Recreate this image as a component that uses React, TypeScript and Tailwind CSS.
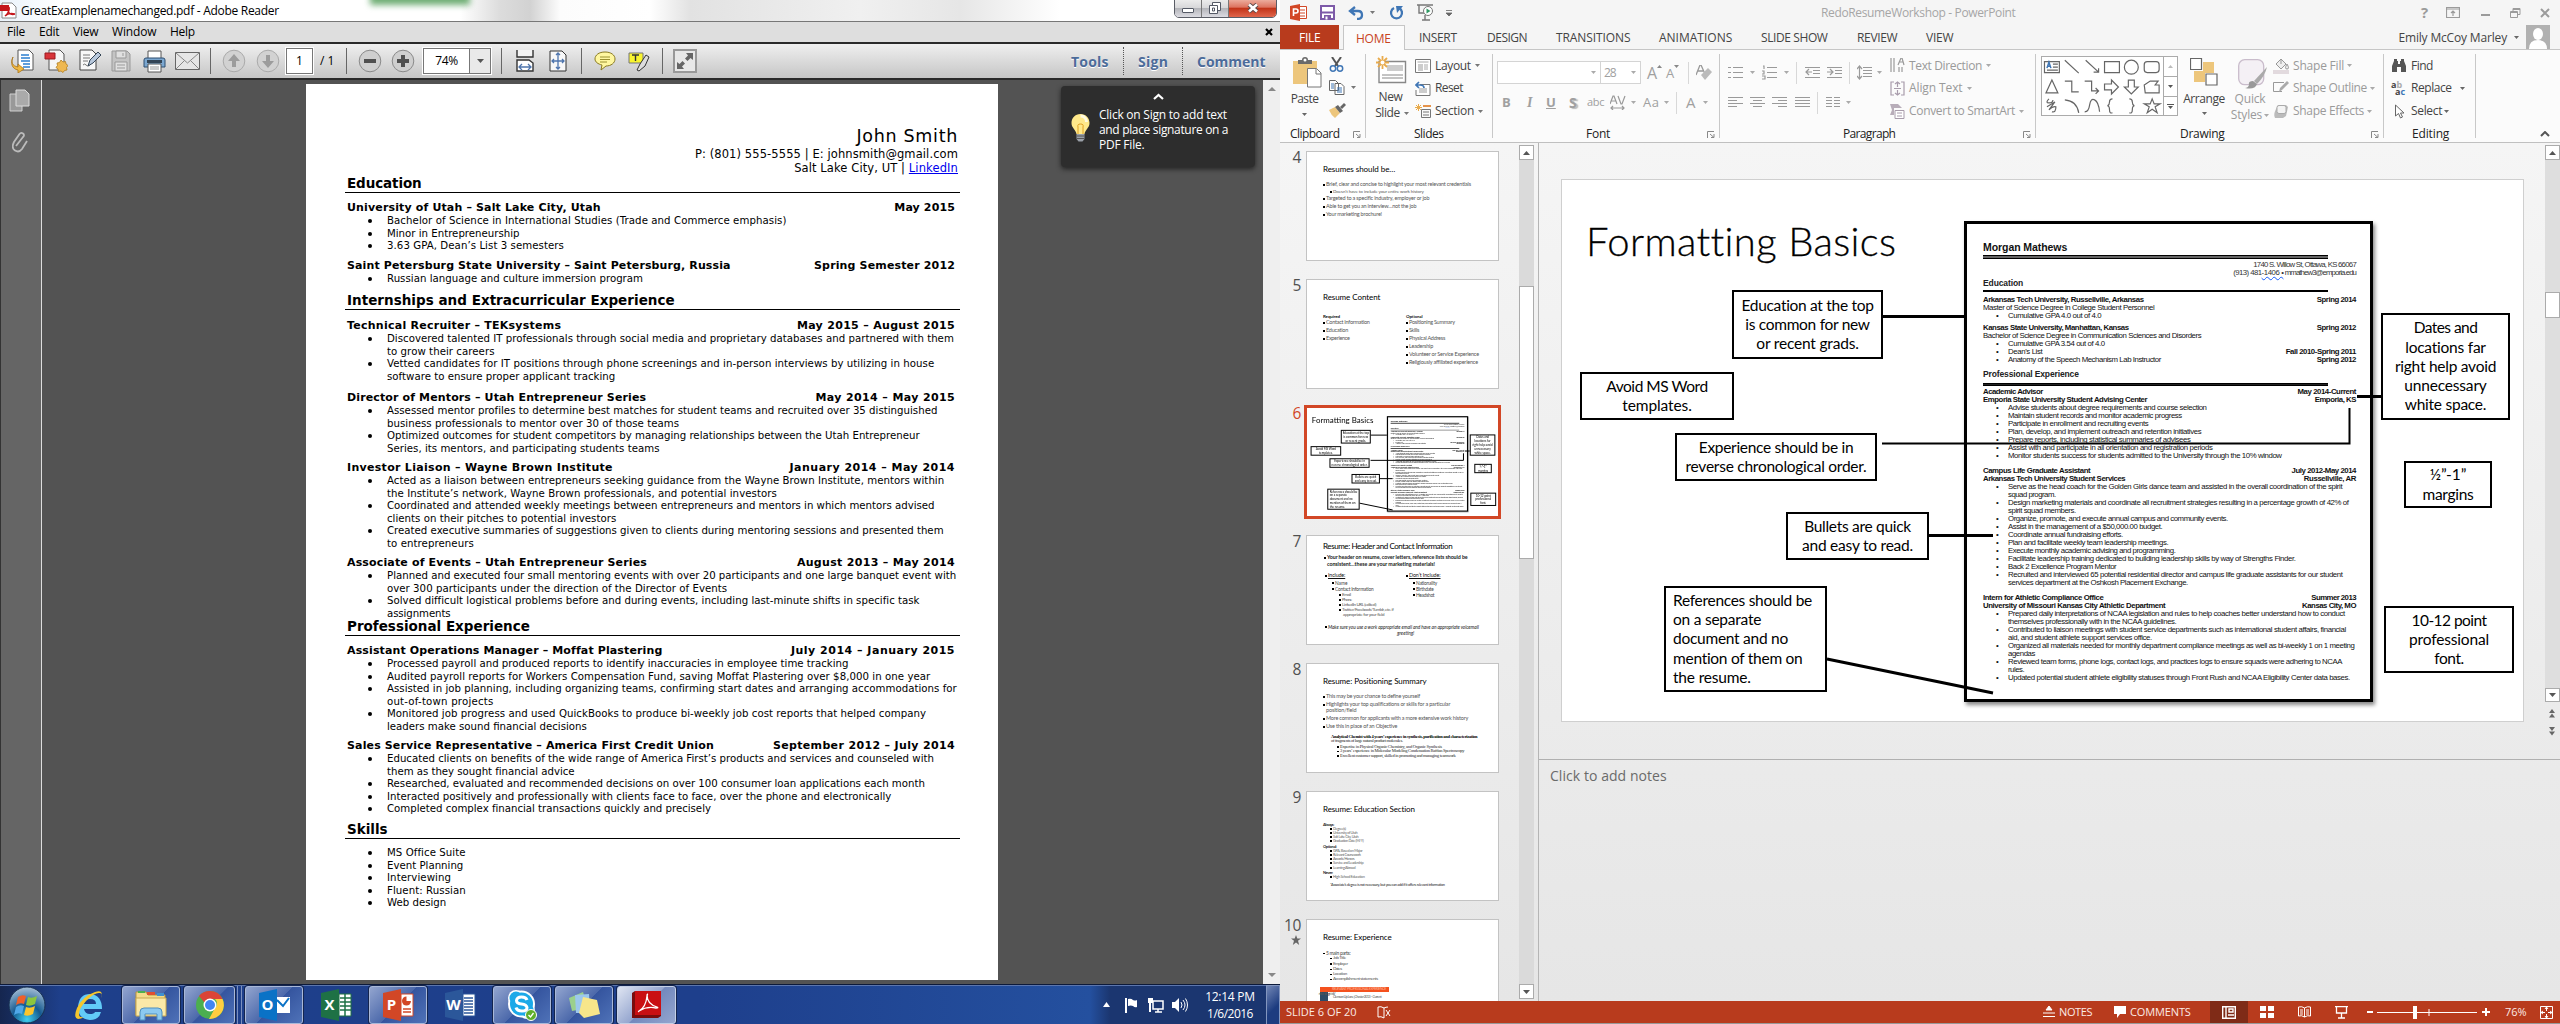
import { useLayoutEffect, useRef, type ReactNode } from "react";

/* Text whose tracking is adjusted so that it fills a given width. */
function T({ w, className = "", children }: { w: number; className?: string; children: string }) {
  const ref = useRef<HTMLSpanElement>(null);
  useLayoutEffect(() => {
    const el = ref.current;
    if (!el) return;
    el.style.letterSpacing = "0px";
    const gap = (w - el.offsetWidth) / children.length;
    el.style.letterSpacing = `${gap.toFixed(3)}px`;
  }, [w, children]);
  return (
    <span ref={ref} className={`inline-block shrink-0 whitespace-nowrap ${className}`}>
      {children}
    </span>
  );
}

function Caret({ className = "text-[#777]" }: { className?: string }) {
  return (
    <svg width="5" height="3" viewBox="0 0 5 3" className={`shrink-0 ${className}`}>
      <path d="M0 0h5L2.5 3z" fill="currentColor" />
    </svg>
  );
}

/* ------------------------------------------------------------------ */
/* Adobe Reader                                                        */
/* ------------------------------------------------------------------ */

function TitleBar() {
  return (
    <div className="relative flex h-[22px] items-center overflow-hidden border-b border-[#777] bg-[linear-gradient(90deg,#e9f2fa_0px,#fff_60px,#fff_460px,#dcdcdc_500px,#d2d2d2_530px,#fcfcfc_560px,#fff_650px,#e2e2e2_690px,#f0f0f0_860px,#e6e6e6_960px,#fff_1060px,#fff_1280px)]">
      <div className="absolute top-[-8px] left-[370px] h-[13px] w-[100px] bg-[#6fae74] blur-[3px]" />
      <svg width="17" height="17" viewBox="0 0 17 17" className="shrink-0">
        <path d="M2 1h10l4 4v11H2z" fill="#fff" stroke="#888" />
        <path d="M0 3h9v6H0z" fill="#c4161c" />
        <path d="M5 14c3-2 5-6 4-9M8 9c1 3 4 4 7 3M5 14c2-2 6-3 10-2" fill="none" stroke="#c4161c" strokeWidth="1.5" />
      </svg>
      <T w={258} className="ml-1 text-[12px] text-black">GreatExamplenamechanged.pdf - Adobe Reader</T>
      <div className="absolute top-[-2px] left-[1174px] flex h-[20px] w-[103px] overflow-hidden rounded-b-[5px] border border-[#5a5d66]">
        <div className="flex w-[27px] items-center justify-center border-r border-[#777] bg-[linear-gradient(#eee_0%,#d8d8da_48%,#b4b5ba_52%,#dcdce2_100%)]">
          <div className="mt-1 h-[5px] w-[12px] rounded-[1px] border border-[#555a66] bg-white" />
        </div>
        <div className="flex w-[27px] items-center justify-center border-r border-[#777] bg-[linear-gradient(#eee_0%,#d8d8da_48%,#b4b5ba_52%,#dcdce2_100%)]">
          <svg width="13" height="12" viewBox="0 0 13 12">
            <path d="M3.5.5h8v8h-8z" fill="#fff" stroke="#555a66" />
            <path d="M.5 3.5h8v8h-8z" fill="#fff" stroke="#555a66" />
            <path d="M3.5 6h2v3h-2z" fill="#fff" stroke="#555a66" />
          </svg>
        </div>
        <div className="flex grow items-center justify-center bg-[linear-gradient(#eeb3a4_0%,#dd7460_45%,#c23419_52%,#e0664c_100%)]">
          <svg width="12" height="10" viewBox="0 0 12 10">
            <path d="M2 1.5l8 7M10 1.5l-8 7" stroke="#5b4a4a" strokeWidth="4.5" />
            <path d="M2 1.5l8 7M10 1.5l-8 7" stroke="#fff" strokeWidth="2.6" />
          </svg>
        </div>
      </div>
    </div>
  );
}

function MenuBar() {
  return (
    <div className="flex h-[20px] items-center bg-[#dedede] pl-[7px] text-[12px] text-black">
      <div className="w-[32px]"><T w={18}>File</T></div>
      <div className="w-[34px]"><T w={20}>Edit</T></div>
      <div className="w-[39px]"><T w={25}>View</T></div>
      <div className="w-[58px]"><T w={44}>Window</T></div>
      <div className="w-[40px]"><T w={25}>Help</T></div>
      <svg width="8" height="8" viewBox="0 0 8 8" className="mr-[7px] ml-auto">
        <path d="M1 1l6 6M7 1l-6 6" stroke="#000" strokeWidth="2.2" />
      </svg>
    </div>
  );
}

const sheet = "M5 1h11l4 4v16H5z";

function ReaderToolbar() {
  return (
    <div className="flex h-[38px] items-center border-y-[2px] border-[#2a2a2a] bg-[linear-gradient(#efefef,#c6c6c6)] pl-[10px] text-[12px] text-black">
      <div className="w-[34px]">
        <svg width="24" height="24" viewBox="0 0 24 24">
          <path d="M8 1h11l4 4v16H8z" fill="#fff" stroke="#555" />
          <path d="M11 6h8M11 9h9M11 12h9M13 15h7M13 18h7" stroke="#2c7fd0" strokeWidth="1.5" />
          <path d="M3 8c-2 5-1 9 5 10v-3l6 5-6 4v-3C2 20 0 14 3 8z" fill="#f0b840" stroke="#a8741a" strokeWidth=".8" />
        </svg>
      </div>
      <div className="w-[34px]">
        <svg width="24" height="24" viewBox="0 0 24 24">
          <path d={sheet} fill="#f6f6f6" stroke="#555" />
          <path d="M1 4h10v6H1z" fill="#d8343a" stroke="#9c1a20" />
          <path d="M17 11l2 2 2.5-.5.5 2.5 2 1.5-1.5 2 .5 2.5-2.5.5-1.5 2-2-1.5-2.5.5-.5-2.5-2-1.5 1.5-2-.5-2.5 2.5-.5z" fill="#efb850" stroke="#b07c20" strokeWidth=".8" />
        </svg>
      </div>
      <div className="w-[33px]">
        <svg width="24" height="24" viewBox="0 0 24 24">
          <path d="M2 1h12l4 4v16H2z" fill="#f8f8f8" stroke="#444" />
          <path d="M5 6h7M5 9h7M5 12h5M5 16q2-2 3 0t4 0" fill="none" stroke="#777" />
          <path d="M10 17l2-6 8-8 3 3-8 8z" fill="#b8c8dc" stroke="#345" />
        </svg>
      </div>
      <div className="w-[32px]">
        <svg width="20" height="22" viewBox="0 0 20 22">
          <path d="M1 1h15l3 3v17H1z" fill="#c4c4c4" stroke="#999" />
          <path d="M5 1h10v7H5zM4 12h12v9H4z" fill="#e0e0e0" stroke="#999" />
          <path d="M6 15h8M6 18h8M12 3v3" stroke="#999" />
        </svg>
      </div>
      <div className="w-[32px]">
        <svg width="23" height="23" viewBox="0 0 23 23">
          <path d="M5 1h13v9H5z" fill="#fff" stroke="#555" />
          <path d="M1 10q0-2 2-2h17q2 0 2 2v7H1z" fill="#7ba7d0" stroke="#2f4f70" />
          <path d="M4 10h15v3H4z" fill="#345" />
          <path d="M5 14h13v8H5z" fill="#fff" stroke="#555" />
          <path d="M7 17h9M7 19h9" stroke="#999" />
        </svg>
      </div>
      <div className="w-[35px]">
        <svg width="25" height="18" viewBox="0 0 25 18">
          <path d="M.5.5h24v17H.5z" fill="#e6e6e6" stroke="#666" />
          <path d="M1 1l11.5 10L24 1M1 17l8-8M24 17l-8-8" fill="none" stroke="#888" />
        </svg>
      </div>
      <div className="h-[26px] w-[12px] border-l border-[#666]" />
      {["M12 5l6 7h-4v6h-4v-6H6z", "M12 19l-6-7h4V6h4v6h4z"].map((d) => (
        <div key={d} className="w-[34px]">
          <svg width="24" height="24" viewBox="0 0 24 24">
            <circle cx="12" cy="12" r="10.8" fill="#d2d2d2" stroke="#aaa" />
            <path d={d} fill="#9c9c9c" />
          </svg>
        </div>
      ))}
      <div className="-ml-[4px] flex h-[26px] w-[27px] items-center justify-center border border-[#777] bg-white outline outline-white">1</div>
      <div className="w-[33px] pl-[7px]">/ 1</div>
      <div className="h-[26px] w-[12px] border-l border-[#666]" />
      {["M6 10h12v4H6z", "M10 6h4v4h4v4h-4v4h-4v-4H6v-4h4z"].map((d) => (
        <div key={d} className="w-[33px]">
          <svg width="24" height="24" viewBox="0 0 24 24">
            <circle cx="12" cy="12" r="10.8" fill="#cfcfcf" stroke="#8a8a8a" />
            <path d={d} fill="#505050" />
          </svg>
        </div>
      ))}
      <div className="-ml-px flex h-[26px] w-[68px] border border-[#777] bg-white outline outline-white">
        <div className="flex w-[46px] items-center justify-center border-r border-[#777]"><T w={23}>74%</T></div>
        <div className="flex grow items-center justify-center bg-[#e9e9e9]">
          <svg width="7" height="4" viewBox="0 0 7 4"><path d="M0 0h7L3.5 4z" fill="#555" /></svg>
        </div>
      </div>
      <div className="w-[10px]" />
      <div className="h-[26px] w-[15px] border-l border-[#666]" />
      <div className="w-[33px]">
        <svg width="18" height="22" viewBox="0 0 18 22">
          <path d="M1 0v7h16V0" fill="#f4f4f4" stroke="#333" strokeWidth="1.4" />
          <path d="M1 21V10h12l4 3v8z" fill="#fff" stroke="#333" strokeWidth="1.4" />
          <path d="M3 17h12M6 14l-3 3 3 3M12 14l3 3-3 3" fill="none" stroke="#4f75ad" strokeWidth="1.3" />
        </svg>
      </div>
      <div className="w-[32px]">
        <svg width="18" height="22" viewBox="0 0 18 22">
          <path d="M1 1h12l4 4v16H1z" fill="#f8f8f8" stroke="#333" />
          <path d="M9 3v16M3 11h12M7 5l2-2 2 2M7 17l2 2 2-2M5 9l-2 2 2 2M13 9l2 2-2 2" fill="none" stroke="#4f75ad" strokeWidth="1.3" />
        </svg>
      </div>
      <div className="h-[26px] w-[13px] border-l border-[#666]" />
      <div className="w-[34px]">
        <svg width="22" height="20" viewBox="0 0 22 20">
          <path d="M11 1c6 0 10 3 10 7s-4 7-9 7l-5 4 1-5c-4-1-7-3-7-6 0-4 4-7 10-7z" fill="#fff7a0" stroke="#8a7a20" />
          <path d="M6 6h10M6 8.5h10M6 11h7" stroke="#9a9030" />
        </svg>
      </div>
      <div className="w-[34px]">
        <svg width="23" height="21" viewBox="0 0 23 21">
          <path d="M1 2h14v10H1z" fill="#f9f52e" stroke="#777" />
          <path d="M4 4h7M7.5 4v6" stroke="#333" strokeWidth="1.4" />
          <path d="M9 19l3-6 6-9 3 2-4 9-6 5z" fill="#ddd" stroke="#333" />
        </svg>
      </div>
      <div className="h-[26px] w-[11px] border-l border-[#666]" />
      <div className="flex h-[24px] w-[24px] items-center justify-center border-2 border-[#999] bg-[#e8e8e8]">
        <svg width="20" height="20" viewBox="0 0 20 20">
          <path d="M18 2v7l-2.5-2-3 3-2.500-2.500 3-3L11 2zM2 18v-7l2.5 2 3-3L10 12.500l-3 3L9 18z" fill="#666" />
        </svg>
      </div>
      <div className="ml-auto flex items-center text-[14px] font-bold text-[#4c6c9a] [text-shadow:0_1px_0_#fff]">
        <div className="flex h-[28px] w-[53px] items-center border-r border-dotted border-[#555]"><T w={38}>Tools</T></div>
        <div className="flex h-[28px] w-[59px] items-center border-r border-dotted border-[#555] pl-[14px]"><T w={30}>Sign</T></div>
        <div className="flex h-[28px] w-[97px] items-center pl-[14px]"><T w={69}>Comment</T></div>
      </div>
    </div>
  );
}

type Line = [string, number];

function Bullets({ items }: { items: Line[][] }) {
  return (
    <ul className="pl-[20px] text-[10.2px]">
      {items.map((lines) => (
        <li key={lines[0][0]} className="flex">
          <span className="mt-[4px] ml-[1px] h-[4px] w-[4px] rounded-full bg-black" />
          <div className="ml-[15px] flex flex-col">
            {lines.map(([t, w]) => (
              <div key={t} className="h-[12.6px] leading-[12.6px]"><T w={w}>{t}</T></div>
            ))}
          </div>
        </li>
      ))}
    </ul>
  );
}

function Heading({ t, w, h = "h-[24px]" }: { t: string; w: number; h?: string }) {
  return (
    <div className={h}>
      <div className="-ml-[2px] h-[17px] w-[615px] border-b border-black pl-[2px] text-[13.5px] leading-[14px] font-bold"><T w={w}>{t}</T></div>
    </div>
  );
}

function Job({ t, w, d, dw, h, items }: { t: string; w: number; d: string; dw: number; h: string; items: Line[][] }) {
  return (
    <div className={`pt-[1px] ${h}`}>
      <div className="flex h-[14px] justify-between pr-[2px] text-[11px] leading-[14px] font-bold">
        <T w={w}>{t}</T>
        <T w={dw}>{d}</T>
      </div>
      <Bullets items={items} />
    </div>
  );
}

function Resume() {
  return (
    <div className="ml-[264px] h-[896px] w-[692px] bg-white pt-[42px] pr-[41px] pl-[41px] font-['DejaVu_Sans'] text-black">
      <div className="-mr-px flex h-[50px] flex-col items-end">
        <div className="h-[21px] text-[17.5px] leading-[21px]"><T w={102}>John Smith</T></div>
        <div className="h-[14px] text-[11.5px] leading-[14px]"><T w={263}>P: (801) 555-5555 | E: johnsmith@gmail.com</T></div>
        <div className="flex h-[14px] text-[11.5px] leading-[14px]">
          <T w={115}>Salt Lake City, UT |&nbsp;</T>
          <T w={49} className="text-[#0000ee] underline">LinkedIn</T>
        </div>
      </div>
      <Heading t="Education" w={75} />
      <Job t="University of Utah – Salt Lake City, Utah" w={254} d="May 2015" dw={61} h="h-[58px]" items={[
        [["Bachelor of Science in International Studies (Trade and Commerce emphasis)", 399]],
        [["Minor in Entrepreneurship", 133]],
        [["3.63 GPA, Dean’s List 3 semesters", 177]],
      ]} />
      <Job t="Saint Petersburg State University – Saint Petersburg, Russia" w={384} d="Spring Semester 2012" dw={141} h="h-[35px]" items={[
        [["Russian language and culture immersion program", 256]],
      ]} />
      <Heading t="Internships and Extracurricular Experience" w={328} h="h-[25px]" />
      <Job t="Technical Recruiter – TEKsystems" w={214} d="May 2015 – August 2015" dw={158} h="h-[72px]" items={[
        [["Discovered talented IT professionals through social media and proprietary databases and partnered with them", 567], ["to grow their careers", 108]],
        [["Vetted candidates for IT positions through phone screenings and in-person interviews by utilizing in house", 547], ["software to ensure proper applicant tracking", 228]],
      ]} />
      <Job t="Director of Mentors – Utah Entrepreneur Series" w={299} d="May 2014 – May 2015" dw={139} h="h-[70px]" items={[
        [["Assessed mentor profiles to determine best matches for student teams and recruited over 35 distinguished", 550], ["business professionals to mentor over 30 of those teams", 292]],
        [["Optimized outcomes for student competitors by managing relationships between the Utah Entrepreneur", 533], ["Series, its mentors, and participating students teams", 273]],
      ]} />
      <Job t="Investor Liaison – Wayne Brown Institute" w={266} d="January 2014 – May 2014" dw={165} h="h-[95px]" items={[
        [["Acted as a liaison between entrepreneurs seeking guidance from the Wayne Brown Institute, mentors within", 557], ["the Institute’s network, Wayne Brown professionals, and potential investors", 390]],
        [["Coordinated and attended weekly meetings between entrepreneurs and mentors in which mentors advised", 548], ["clients on their pitches to potential investors", 229]],
        [["Created executive summaries of suggestions given to clients during mentoring sessions and presented them", 557], ["to entrepreneurs", 87]],
      ]} />
      <Job t="Associate of Events – Utah Entrepreneur Series" w={300} d="August 2013 – May 2014" dw={158} h="h-[64px]" items={[
        [["Planned and executed four small mentoring events with over 20 participants and one large banquet event with", 569], ["over 300 participants under the direction of the Director of Events", 340]],
        [["Solved difficult logistical problems before and during events, including last-minute shifts in specific task", 532], ["assignments", 64]],
      ]} />
      <Heading t="Professional Experience" w={183} />
      <Job t="Assistant Operations Manager – Moffat Plastering" w={315} d="July 2014 – January 2015" dw={164} h="h-[95px]" items={[
        [["Processed payroll and produced reports to identify inaccuracies in employee time tracking", 462]],
        [["Audited payroll reports for Workers Compensation Fund, saving Moffat Plastering over $8,000 in one year", 543]],
        [["Assisted in job planning, including organizing teams, confirming start dates and arranging accommodations for", 570], ["out-of-town projects", 106]],
        [["Monitored job progress and used QuickBooks to produce bi-weekly job cost reports that helped company", 539], ["leaders make sound financial decisions", 200]],
      ]} />
      <Job t="Sales Service Representative – America First Credit Union" w={367} d="September 2012 – July 2014" dw={182} h="h-[84px]" items={[
        [["Educated clients on benefits of the wide range of America First’s products and services and counseled with", 547], ["them as they sought financial advice", 188]],
        [["Researched, evaluated and recommended decisions on over 100 consumer loan applications each month", 538]],
        [["Interacted positively and professionally with clients face to face, over the phone and electronically", 504]],
        [["Completed complex financial transactions quickly and precisely", 324]],
      ]} />
      <Heading t="Skills" w={41} h="h-[25px]" />
      <Bullets items={[
        [["MS Office Suite", 79]],
        [["Event Planning", 76]],
        [["Interviewing", 64]],
        [["Fluent: Russian", 79]],
        [["Web design", 59]],
      ]} />
    </div>
  );
}

function ReaderBody() {
  return (
    <div className="flex h-[904px] bg-[#535353]">
      <div className="flex w-[42px] shrink-0 flex-col items-center border-r border-[#ddd] bg-[#656565] pt-[9px] pr-[2px] shadow-[inset_1px_0_0_#333]">
        <svg width="22" height="23" viewBox="0 0 22 23">
          <path d="M1 5h12v17H1z" fill="#999" stroke="#d0d0d0" />
          <path d="M7 1h9l4 4v12H7z" fill="#aaa" stroke="#ddd" />
        </svg>
        <svg width="16" height="24" viewBox="0 0 16 24" className="mt-[18px]">
          <path d="M4 16l7-9q2-2 0-3.5T7.5 4L2 12q-3 6 1 8.5T10 19l5-8" fill="none" stroke="#bbb" strokeWidth="1.8" />
        </svg>
      </div>
      <div className="relative grow pt-[4px]">
        <Resume />
        <div className="absolute top-[6px] left-[1019px] flex h-[81px] w-[194px] flex-col items-center rounded-[4px] bg-[#2d2d2d] pt-[7px] text-[12px] text-white shadow-[0_2px_5px_#222]">
          <svg width="11" height="7" viewBox="0 0 11 7"><path d="M1 6l4.5-4L10 6" fill="none" stroke="#fff" strokeWidth="2.2" /></svg>
          <div className="mt-[7px] flex w-full pl-[10px]">
            <svg width="19" height="28" viewBox="0 0 19 28" className="mt-[7px]">
              <path d="M9.5 0C15 0 18.5 4 18.5 9c0 5-4 6-5 11h-8C4.5 15 .5 14 .5 9c0-5 3.5-9 9-9z" fill="#ffe98a" />
              <path d="M9.5 2c4 0 6 3 6 6" fill="none" stroke="#fffbe0" strokeWidth="3" />
              <path d="M7 20v-7q-1-3 2.500-3t2.500 3v7" fill="none" stroke="#e0a020" />
              <path d="M5.5 20h8v5l-2 2.5h-4l-2-2.5z" fill="#9aa0a8" />
              <path d="M5.5 22h8M5.5 24.5h8" stroke="#555" />
            </svg>
            <div className="ml-[9px] leading-[15px]">
              <div><T w={128}>Click on Sign to add text</T></div>
              <div><T w={129}>and place signature on a</T></div>
              <div><T w={45}>PDF File.</T></div>
            </div>
          </div>
        </div>
      </div>
      <div className="flex w-[17px] flex-col items-center justify-between bg-[#efefef] py-[7px]">
        <svg width="8" height="4" viewBox="0 0 8 4"><path d="M4 0l4 4H0z" fill="#888" /></svg>
        <svg width="8" height="4" viewBox="0 0 8 4"><path d="M4 4l4-4H0z" fill="#888" /></svg>
      </div>
    </div>
  );
}

function TaskButton({ w, active, className = "", children }: { w: string; active?: boolean; className?: string; children: ReactNode }) {
  return (
    <div className={`flex h-[38px] items-center justify-center ${w} ${className} ${active ? "rounded-[3px] border border-[#a9b8d8] bg-[linear-gradient(135deg,#93a5cf_0%,#4c69ab_50%,#35559f_51%,#4f72b8_100%)] shadow-[0_0_0_1px_#14254f]" : ""}`}>
      {children}
    </div>
  );
}

function OfficeTile({ letter, color, children }: { letter: string; color: string; children: ReactNode }) {
  return (
    <div className="relative flex h-[34px] w-[31px] items-center">
      <svg width="31" height="34" viewBox="0 0 31 34" className="absolute inset-0">
        <path d="M0 5l18-4v32L0 29z" fill={color} />
        {children}
      </svg>
      <span className="relative w-[18px] text-center text-[15px] font-bold text-white">{letter}</span>
    </div>
  );
}

function Taskbar() {
  return (
    <div className="flex h-[40px] items-center border-t border-[#0d1a3a] bg-[linear-gradient(90deg,#15264f_0px,#1e3f8a_60px,#1e3f8c_700px,#24509f_1090px,#1b3670_1110px,#1b3670_1280px)] shadow-[inset_0_1px_0_#5c76ad]">
      <div className="flex w-[62px] justify-center pr-[8px]">
        <svg width="38" height="38" viewBox="0 0 38 38">
          <defs>
            <radialGradient id="orb" cx=".5" cy=".9" r=".9">
              <stop offset="0" stopColor="#3fd0f0" />
              <stop offset=".45" stopColor="#155a90" />
              <stop offset="1" stopColor="#a8c0d8" />
            </radialGradient>
          </defs>
          <circle cx="19" cy="19" r="18" fill="url(#orb)" stroke="#183050" />
          <path d="M10 11q4-3 8-1l-2 8q-4-2-8 1z" fill="#f0602a" />
          <path d="M20 11q4 2 9-1l-2 8q-5 3-9 1z" fill="#8cc63e" />
          <path d="M8 21q4-3 8-1l-2 8q-4-2-8 1z" fill="#50a8e8" />
          <path d="M18 21q4 2 9-1l-2 8q-5 3-9 1z" fill="#fcc52c" />
        </svg>
      </div>
      <TaskButton w="w-[54px]">
        <svg width="34" height="34" viewBox="0 0 34 34">
          <path d="M30 21H12q1 5 6 5 4 0 5-2h6q-2 8-11 8Q6 31 6 19 7 6 18 6q12 1 12 15zM12 16h12q0-5-6-5-5 0-6 5z" fill="#62cbf8" />
          <path d="M29 10q3-9-6-6Q11 8 5 20q-4 10 1 11 3 0 6-2-5 1-5-3 0-6 8-14 8-8 13-7 3 1 1 5z" fill="#f6c62c" />
        </svg>
      </TaskButton>
      <TaskButton w="w-[58px]" active className="ml-[6px]">
        <svg width="34" height="32" viewBox="0 0 34 32">
          <path d="M2 3h10l2 3h17v20H2z" fill="#f4dc8c" stroke="#b8953c" />
          <path d="M4 2h7v2H4z" fill="#4caf50" /><path d="M13 3h8v3h-8z" fill="#e05030" /><path d="M23 4h7v3h-7z" fill="#4090d0" />
          <path d="M2 9h30v18H2z" fill="#fae9a8" stroke="#c8a850" />
          <path d="M6 31v-8q0-4 4-4h14q4 0 4 4v8h-5v-6H11v6z" fill="#8ccaf0" stroke="#4f8fbf" />
        </svg>
      </TaskButton>
      <TaskButton w="w-[51px]" active className="ml-[4px]">
        <svg width="30" height="30" viewBox="0 0 30 30">
          <circle cx="15" cy="15" r="14" fill="#4caf50" />
          <path d="M15 1a14 14 0 0 1 12.5 8H15a6 6 0 0 0-5.5 3.5L4 6A14 14 0 0 1 15 1z" fill="#db4437" />
          <path d="M27.5 9A14 14 0 0 1 14 29l6-11a6 6 0 0 0 0-9z" fill="#ffcd40" />
          <circle cx="15" cy="15" r="6.5" fill="#fff" /><circle cx="15" cy="15" r="5" fill="#4285f4" />
        </svg>
      </TaskButton>
      <div className="h-[38px] w-[3px] border-r border-[#7c90bf]" />
      <div className="h-[38px] w-[4px] border-r border-[#7c90bf]" />
      <TaskButton w="w-[58px]" active className="ml-[3px]">
        <OfficeTile letter="O" color="#0a72c6"><path d="M18 9h13v16H18z" fill="#fff" /><path d="M18 12l6 6 6-8" fill="none" stroke="#0a72c6" strokeWidth="2" /></OfficeTile>
      </TaskButton>
      <TaskButton w="w-[58px]" className="ml-[4px]">
        <OfficeTile letter="X" color="#1e7145"><path d="M18 6h12v22H18z" fill="#fff" stroke="#1e7145" /><path d="M19 10h11M19 14h11M19 18h11M19 22h11M24 6v22" stroke="#1e7145" strokeWidth="1.5" /></OfficeTile>
      </TaskButton>
      <TaskButton w="w-[58px]" active className="ml-[4px]">
        <OfficeTile letter="P" color="#d24726"><path d="M18 6h12v22H18z" fill="#fff" stroke="#d24726" /><path d="M20 21h8M20 24h8" stroke="#d24726" strokeWidth="1.5" /><circle cx="23.5" cy="13" r="4.5" fill="#d24726" /><path d="M23.5 13V8a5 5 0 0 1 5 5z" fill="#fff" /></OfficeTile>
      </TaskButton>
      <TaskButton w="w-[58px]" className="ml-[4px]">
        <OfficeTile letter="W" color="#2b579a"><path d="M18 6h12v22H18z" fill="#fff" stroke="#2b579a" /><path d="M19 10h9M19 13h9M19 16h9M19 19h9M19 22h9M19 25h9" stroke="#2b579a" strokeWidth="1.5" /></OfficeTile>
      </TaskButton>
      <TaskButton w="w-[58px]" active className="ml-[4px]">
        <svg width="30" height="32" viewBox="0 0 30 32">
          <circle cx="9" cy="9" r="8" fill="#fff" /><circle cx="20" cy="22" r="8" fill="#fff" /><circle cx="14.5" cy="15" r="13.5" fill="#fff" />
          <circle cx="9" cy="9" r="6.5" fill="#1ca9e8" /><circle cx="20" cy="21" r="6.5" fill="#1ca9e8" /><circle cx="14.5" cy="15" r="11.5" fill="#1ca9e8" />
          <path d="M20 11q-1-3-5.5-3T9.5 11.5q0 3 5 3.5t5.5 3.5Q20 22 15 22t-6-3.5" fill="none" stroke="#fff" strokeWidth="3" />
          <circle cx="24" cy="26" r="5.5" fill="#5fae2c" stroke="#fff" /><path d="M21.5 26l2 2 3-4" fill="none" stroke="#fff" strokeWidth="1.3" />
        </svg>
      </TaskButton>
      <TaskButton w="w-[58px]" active className="ml-[4px]">
        <svg width="34" height="30" viewBox="0 0 34 30">
          <path d="M2 8l14-6 5 16-16 3z" fill="#9bd08c" /><path d="M8 5l14-1 1 19H9z" fill="#9cc8ec" /><path d="M16 7l14 3 3 14-16 4-5-5z" fill="#f7e68a" />
        </svg>
      </TaskButton>
      <div className="ml-[4px] flex h-[38px] w-[59px] items-center justify-center rounded-[3px] border border-[#c5d0e6] bg-[linear-gradient(135deg,#dfe5f2_0%,#95a6cf_50%,#7389bd_51%,#94a6cf_100%)] shadow-[0_0_0_1px_#14254f]">
        <svg width="31" height="29" viewBox="0 0 31 29">
          <path d="M1 3l3-2h26v25l-3 2H1z" fill="#7a0c0c" /><path d="M4 1h26v24H4z" fill="#c90f12" />
          <path d="M8 21q7-4 8-15 1-3 0-1 0 9 10 12 2 1-1 1-9-2-17 3-1 1 0 0z" fill="none" stroke="#fff" strokeWidth="1.3" />
        </svg>
      </div>
      <div className="ml-auto flex items-center text-white">
        <svg width="7" height="5" viewBox="0 0 7 5"><path d="M3.5 0L7 5H0z" fill="#fff" /></svg>
        <svg width="14" height="16" viewBox="0 0 14 16" className="ml-[14px]"><path d="M2 1v15" stroke="#fff" strokeWidth="2" /><path d="M4 2q3-1 5 1 2 1 4 0v7q-2 1-4-1-2-1-5 0z" fill="#fff" /></svg>
        <svg width="16" height="16" viewBox="0 0 16 16" className="ml-[10px]"><path d="M5 4h10v8H5zM7 15h7M10 12v3" fill="#1b3670" stroke="#fff" strokeWidth="1.5" /><path d="M0 1h5v5H3v9H1V6H0z" fill="#fff" /></svg>
        <svg width="16" height="16" viewBox="0 0 16 16" className="ml-[8px]"><path d="M0 5h3l4-4v14l-4-4H0z" fill="#fff" /><path d="M9 5q2 3 0 6M11 3q4 5 0 10M13.5 1.500q4 6.500 0 13" fill="none" stroke="#fff" /></svg>
        <div className="ml-[16px] flex w-[52px] flex-col items-center text-[12px] leading-[17px]">
          <T w={50}>12:14 PM</T>
          <T w={46}>1/6/2016</T>
        </div>
        <div className="ml-[10px] h-[40px] w-[14px] border border-[#8396bf] bg-[linear-gradient(135deg,#7186b5,#1d3c80_60%)]" />
      </div>
    </div>
  );
}

/* ------------------------------------------------------------------ */
/* PowerPoint                                                          */
/* ------------------------------------------------------------------ */

function PptTitle() {
  return (
    <div className="flex h-[25px] items-center bg-[#f5f5f5] pl-[10px]">
      <div className="w-[30px]">
        <svg width="17" height="17" viewBox="0 0 17 17">
          <path d="M0 2l10-2v17L0 15z" fill="#d24726" /><path d="M10 2.500h6.500v12H10" fill="#fff" stroke="#d24726" />
          <path d="M10 6h5M10 9h5M10 12h5" stroke="#d24726" /><path d="M3.500 12V5H6q2 0 2 2T6 9H3.500" fill="none" stroke="#fff" strokeWidth="1.6" />
        </svg>
      </div>
      <div className="w-[28px]">
        <svg width="15" height="15" viewBox="0 0 15 15"><path d="M1 1h13v13H1z" fill="#fff" stroke="#7d5aa8" strokeWidth="2" /><path d="M1 7.500h13" stroke="#7d5aa8" strokeWidth="2" /><path d="M4 10h7v5H4z" fill="#7d5aa8" /><path d="M5.500 11.500h2v3h-2z" fill="#fff" /></svg>
      </div>
      <div className="flex w-[41px] items-center gap-[6px]">
        <svg width="16" height="14" viewBox="0 0 16 14"><path d="M7 1L2 5l5 4M3 5h7q4 0 4 4t-5 4" fill="none" stroke="#3f76b5" strokeWidth="2.3" /></svg>
        <Caret />
      </div>
      <div className="w-[28px]">
        <svg width="15" height="14" viewBox="0 0 15 14"><path d="M5 2a5.500 5.500 0 1 0 5 0" fill="none" stroke="#3f76b5" strokeWidth="2.3" /><path d="M7 0h7L8 7z" fill="#3f76b5" /></svg>
      </div>
      <div className="w-[29px]">
        <svg width="17" height="17" viewBox="0 0 17 17"><path d="M0 1h16M2 1v8h5M5 16h8M8 11v5" fill="none" stroke="#777" strokeWidth="1.4" /><circle cx="11" cy="7" r="4.5" fill="#fff" stroke="#777" /><path d="M9.500 4.500l4 2.500-4 2.500z" fill="#2f9a64" /></svg>
      </div>
      <svg width="6" height="6" viewBox="0 0 6 6"><path d="M0 .5h6M0 3h6L3 6z" fill="#666" stroke="#666" strokeWidth=".8" /></svg>
      <div className="ml-[369px] text-[12px] text-[#a6a6a6]"><T w={195}>RedoResumeWorkshop - PowerPoint</T></div>
      <div className="ml-auto flex items-center pr-[10px] text-[#9b9b9b]">
        <span className="w-[25px] text-[15px] font-bold">?</span>
        <svg width="14" height="11" viewBox="0 0 14 11" className="mr-[21px]"><path d="M.5.5h13v10H.5zM0 2h14M7 9V4M5 6l2-2 2 2" fill="none" stroke="currentColor" strokeWidth="1.2" /></svg>
        <div className="mt-[4px] mr-[20px] h-[2px] w-[9px] bg-[#9b9b9b]" />
        <svg width="11" height="10" viewBox="0 0 11 10" className="mr-[19px]"><path d="M.5 3.500h7v6h-7zM3 3V.5h7v6H8M1 4.500h7M3 1.500h7" fill="none" stroke="currentColor" /></svg>
        <svg width="10" height="10" viewBox="0 0 10 10"><path d="M1 1l8 8M9 1l-8 8" stroke="currentColor" strokeWidth="2" /></svg>
      </div>
    </div>
  );
}

function Tabs() {
  return (
    <div className="flex h-[25px] items-stretch border-b border-[#c6c6c6] bg-[#f5f5f5] text-[12px] leading-[25px] text-[#444]">
      <div className="w-[59px] bg-[#b83b1d] pl-[19px] text-white"><T w={21}>FILE</T></div>
      <div className="ml-[4px] h-[26px] w-[62px] border border-b-0 border-[#c6c6c6] bg-[#fbfbfb] pl-[12px] text-[#c8441f]"><T w={35}>HOME</T></div>
      <div className="ml-[14px] w-[68px]"><T w={38}>INSERT</T></div>
      <div className="w-[69px]"><T w={40}>DESIGN</T></div>
      <div className="w-[103px]"><T w={74}>TRANSITIONS</T></div>
      <div className="w-[102px]"><T w={73}>ANIMATIONS</T></div>
      <div className="w-[96px]"><T w={67}>SLIDE SHOW</T></div>
      <div className="w-[69px]"><T w={40}>REVIEW</T></div>
      <div className="w-[60px]"><T w={27}>VIEW</T></div>
      <div className="mr-[10px] ml-auto flex items-center">
        <T w={109}>Emily McCoy Marley</T>
        <Caret className="mx-[7px] text-[#666]" />
        <svg width="24" height="24" viewBox="0 0 24 24"><path d="M0 0h24v24H0z" fill="#b1b1b1" /><ellipse cx="12" cy="9" rx="5" ry="6" fill="#fff" /><path d="M3 24q0-9 9-9t9 9z" fill="#fff" /></svg>
      </div>
    </div>
  );
}

function Launcher({ className = "" }: { className?: string }) {
  return (
    <svg width="8" height="7" viewBox="0 0 8 7" className={className}><path d="M.5 7V.5H7M3 3l4 3.500M7 3v3.500H4" fill="none" stroke="#888" /></svg>
  );
}

function Group({ w, label, lw, pad, launcher, children }: { w: string; label: string; lw: number; pad: string; launcher?: boolean; children: ReactNode }) {
  return (
    <div className={`flex h-[84px] flex-col border-r border-[#c8c8c8] ${w}`}>
      <div className="flex h-[72px] shrink-0">{children}</div>
      <div className={`flex h-[16px] shrink-0 items-center text-[12px] text-[#222] ${pad}`}>
        <T w={lw}>{label}</T>
        {launcher && <Launcher className="mr-[4px] ml-auto" />}
      </div>
    </div>
  );
}

const lineIcon = (d: string, w = 15, cls = "text-[#9a9a9a]") => (
  <svg width={w} height="15" viewBox={`0 0 ${w} 15`} className={`shrink-0 ${cls}`}><path d={d} fill="none" stroke="currentColor" strokeWidth="1.2" /></svg>
);

function Ribbon() {
  return (
    <div className="flex h-[93px] items-start border-b border-[#c0c0c0] bg-[#fbfbfb] pt-[4px] text-[12px] text-[#444]">
      <Group w="w-[86px]" label="Clipboard" lw={49} pad="pl-[10px]" launcher>
        <div className="flex w-[49px] flex-col items-center">
          <svg width="29" height="31" viewBox="0 0 29 31" className="mt-[3px] ml-[5px]">
            <path d="M0 4h24v23H0z" fill="#edc67c" /><path d="M5 7V3h4q0-3 3-3t3 3h4v4z" fill="#6a6a6a" /><circle cx="12" cy="3" r="1.5" fill="#fff" />
            <path d="M14.500 11.500h9l4.500 4.500v14H14.500z" fill="#fff" stroke="#777" /><path d="M23 12v5h5" fill="none" stroke="#777" />
          </svg>
          <T w={28} className="mt-[2px] leading-[17px]">Paste</T>
          <Caret className="mt-[6px] text-[#666]" />
        </div>
        <div className="flex flex-col text-[#555]">
          <svg width="15" height="15" viewBox="0 0 15 15" className="mt-[3px]"><path d="M3 0l6 9M12 0L6 9" stroke="#555" strokeWidth="2" /><circle cx="4" cy="11.5" r="2.7" fill="none" stroke="#3f76b5" strokeWidth="1.5" /><circle cx="11" cy="11.5" r="2.7" fill="none" stroke="#3f76b5" strokeWidth="1.5" /></svg>
          <div className="mt-[8px] flex items-center gap-[6px]">
            <svg width="16" height="15" viewBox="0 0 16 15"><path d="M.5.5h6l3 3v7h-9zM6 3.500h6l3 3v8H6z" fill="#fff" stroke="#666" /><path d="M2 4h3M2 6h3M2 8h3M8 8h5M8 10h5M8 12h5" stroke="#3f76b5" /></svg>
            <Caret />
          </div>
          <svg width="17" height="15" viewBox="0 0 17 15" className="mt-[8px]"><path d="M0 7l6-3 5 6-5 5q-4-3-6-8z" fill="#edc67c" /><path d="M6 4l3-2 5 6-3 2zM11 4l4-4 2 2-4 4z" fill="#666" /></svg>
        </div>
      </Group>
      <Group w="w-[127px]" label="Slides" lw={29} pad="pl-[48px]">
        <div className="flex w-[49px] flex-col items-center">
          <svg width="31" height="28" viewBox="0 0 31 28" className="mt-[2px] ml-[1px]">
            <path d="M3 5.500h26.500v21H3z" fill="#fff" stroke="#888" strokeWidth="1.4" /><path d="M11 9h16v6H11z" fill="#ccc" /><path d="M6 19h21M6 22h21" stroke="#888" />
            <path d="M6.500 0v13M0 6.500h13M2 2l9 9M11 2l-9 9" stroke="#e9ab4c" strokeWidth="1.8" /><circle cx="6.5" cy="6.5" r="2" fill="#fff" />
          </svg>
          <T w={24} className="mt-[4px] leading-[17px]">New</T>
          <div className="ml-[3px] flex items-center gap-[4px] leading-[16px]"><T w={25}>Slide</T><Caret /></div>
        </div>
        <div className="flex flex-col gap-[5px] leading-[18px]">
          <div className="flex h-[18px] items-center gap-[4px] pt-[5px]">
            <svg width="16" height="14" viewBox="0 0 16 14"><path d="M.5.5h15v13H.5z" fill="#fff" stroke="#777" /><path d="M2.500 3h11M9 6h4M9 8h4M9 10h4" stroke="#aaa" /><path d="M3 5h5v7H3z" fill="#ccc" /></svg>
            <T w={36}>Layout</T><Caret />
          </div>
          <div className="flex h-[18px] items-center gap-[4px] pt-[4px]">
            <svg width="16" height="15" viewBox="0 0 16 15"><path d="M5 3.500h10v11H1V9" fill="#fff" stroke="#777" /><path d="M4 7h8v5H4z" fill="#ccc" /><path d="M4 1L1 4l3 3M1 4h4q4 0 4 3" fill="none" stroke="#3f76b5" strokeWidth="1.7" /></svg>
            <T w={28}>Reset</T>
          </div>
          <div className="flex h-[18px] items-center gap-[4px] pt-[4px]">
            <svg width="16" height="16" viewBox="0 0 16 16"><path d="M8 3h8" stroke="#e07a20" strokeWidth="1.6" /><path d="M6.500 6.500h9v8h-9zM8 9h6M8 12h6" fill="none" stroke="#777" /><path d="M3.500 1v7M0 4.500h7M1 2l5 5M6 2L1 7" stroke="#e9ab4c" /></svg>
            <T w={39}>Section</T><Caret />
          </div>
        </div>
      </Group>
      <Group w="w-[227px]" label="Font" lw={24} pad="pl-[93px]" launcher>
        <div className="flex flex-col pl-[4px] text-[#a0a0a0]">
          <div className="mt-[7px] flex h-[23px] items-center">
            <div className="flex h-[23px] w-[104px] items-center justify-end border border-[#d4d4d4] bg-white pr-[4px]"><Caret className="text-[#aaa]" /></div>
            <div className="-ml-px flex h-[23px] w-[41px] items-center justify-between border border-[#d4d4d4] bg-white pr-[4px] pl-[3px]"><T w={12}>28</T><Caret className="text-[#aaa]" /></div>
            <div className="flex w-[22px] items-start pl-[6px] text-[16px] leading-[20px]">A<Caret className="mt-[2px] rotate-180 text-[#888]" /></div>
            <div className="flex w-[25px] items-start pl-[3px] text-[13px] leading-[20px]">A<Caret className="mt-[2px] text-[#888]" /></div>
            <div className="h-[22px] w-[8px] border-l border-[#d8d8d8]" />
            <svg width="16" height="16" viewBox="0 0 16 16"><path d="M0 10L4 0h1l4 9M2 6h5" fill="none" stroke="#999" strokeWidth="1.3" /><path d="M5 10l7-7 4 4-7 8z" fill="#bbb" /></svg>
          </div>
          <div className="mt-[7px] flex h-[23px] items-center">
            <span className="w-[22px] pl-[5px] text-[13px] font-bold">B</span>
            <span className="w-[22px] pl-[8px] font-['Liberation_Serif'] text-[14px] font-bold italic">I</span>
            <span className="w-[22px] pl-[5px] text-[13px] font-bold underline">U</span>
            <span className="w-[20px] pl-[6px] text-[14px] font-bold [text-shadow:2px_1px_1px_#bbb]">S</span>
            <span className="w-[22px] pl-[4px] text-[11px] line-through"><T w={17}>abc</T></span>
            <div className="flex w-[33px] items-center gap-[5px] pl-[5px]">
              <svg width="16" height="15" viewBox="0 0 16 15"><path d="M0 9l3-8h1l3 8M1 6h5M8 1l3 8h1l3-8M1 13h13M3 11l-2 2 2 2M12 11l2 2-2 2" fill="none" stroke="#999" strokeWidth="1.2" /></svg>
              <Caret className="text-[#aaa]" />
            </div>
            <div className="flex w-[38px] items-center gap-[5px] pl-[5px] text-[13px]"><T w={16}>Aa</T><Caret className="text-[#aaa]" /></div>
            <div className="h-[22px] w-[10px] border-l border-[#d8d8d8]" />
            <div className="flex items-center gap-[7px] text-[15px]">A<Caret className="text-[#aaa]" /></div>
          </div>
        </div>
      </Group>
      <Group w="w-[316px]" label="Paragraph" lw={52} pad="pl-[123px]" launcher>
        <div className="flex w-[170px] flex-col pl-[8px] text-[#a0a0a0]">
          <div className="mt-[7px] flex h-[23px] items-center">
            <div className="flex w-[34px] items-center gap-[7px]">{lineIcon("M0 2.500h3M5 2.500h10M0 7.500h3M5 7.500h10M0 12.500h3M5 12.500h10")}<Caret className="text-[#aaa]" /></div>
            <div className="flex w-[34px] items-center gap-[7px]">{lineIcon("M1 1h1v3M5 2.500h10M0 6h2v3H0M5 7.500h10M0 11h3v3H0M5 12.500h10")}<Caret className="text-[#aaa]" /></div>
            <div className="h-[22px] w-[9px] border-l border-[#d8d8d8]" />
            <div className="w-[22px]">{lineIcon("M0 2.500h15M8 5.500h7M8 8.500h7M0 12.500h15M7 7H1M4 4L1 7l3 3")}</div>
            <div className="w-[22px]">{lineIcon("M0 2.500h15M8 5.500h7M8 8.500h7M0 12.500h15M0 7h6M3 4l3 3-3 3")}</div>
            <div className="h-[22px] w-[8px] border-l border-[#d8d8d8]" />
            <div className="flex items-center gap-[5px]">{lineIcon("M6 2.500h9M6 5.500h9M6 8.500h9M6 11.500h9M2.500 1v13M0 4l2.500-3L5 4M0 11l2.500 3L5 11")}<Caret className="text-[#aaa]" /></div>
          </div>
          <div className="mt-[7px] flex h-[23px] items-center">
            <div className="w-[22px]">{lineIcon("M0 2.500h15M0 5.500h9M0 8.500h15M0 11.500h9")}</div>
            <div className="w-[22px]">{lineIcon("M0 2.500h15M3 5.500h9M0 8.500h15M3 11.500h9")}</div>
            <div className="w-[23px]">{lineIcon("M0 2.500h15M6 5.500h9M0 8.500h15M6 11.500h9")}</div>
            <div className="w-[22px]">{lineIcon("M0 2.500h15M0 5.500h15M0 8.500h15M0 11.500h15")}</div>
            <div className="h-[22px] w-[9px] border-l border-[#d8d8d8]" />
            <div className="flex items-center gap-[5px]">{lineIcon("M0 2.500h6M8 2.500h6M0 5.500h6M8 5.500h6M0 8.500h6M8 8.500h6M0 11.500h6M8 11.500h6")}<Caret className="text-[#aaa]" /></div>
          </div>
        </div>
        <div className="flex flex-col gap-[5px] text-[#9a9a9a]">
          <div className="flex h-[18px] items-center gap-[4px] pt-[5px]">{lineIcon("M1 0v14M4 0v14M8 7l3-7h1l2 7M9 4h4M9 9v5M12 9v5")}<T w={73}>Text Direction</T><Caret className="text-[#aaa]" /></div>
          <div className="flex h-[18px] items-center gap-[4px] pt-[4px]">{lineIcon("M4 1H1v13h3M11 1h3v13h-3M4 7.500h7M7.500 1v5M5 3l2.500-2L10 3M7.500 9v5M5 12l2.500 2 2.500-2", 15, "text-[#a89cab]")}<T w={54}>Align Text</T><Caret className="text-[#aaa]" /></div>
          <div className="flex h-[18px] items-center gap-[4px] pt-[4px]"><svg width="15" height="15" viewBox="0 0 15 15"><path d="M0 0h8l4 4H4v7H0l2-5z" fill="#b8adb9" /><path d="M5 6.500h9v8H5zM7 9h5M7 12h5" fill="#fff" stroke="#a89cab" /></svg><T w={106}>Convert to SmartArt</T><Caret className="text-[#aaa]" /></div>
        </div>
      </Group>
      <Group w="w-[348px]" label="Drawing" lw={44} pad="pl-[144px]" launcher>
        <div className="mt-[2px] ml-[5px] flex h-[60px] w-[137px] border border-[#ababab] bg-white">
          <svg width="122" height="58" viewBox="0 0 122 58" fill="none" stroke="#666" strokeWidth="1.2">
            <path d="M2.500 4.500h15v11h-15zM11 7h5M11 10h5M5 13h11" /><path d="M5 11l2-6 2 6M5.500 9h3" stroke="#3f76b5" strokeWidth="1.5" />
            <path d="M23 3l14 13M44 3l13 12M57 11v4h-5M63 4.500h15v11H63z" /><circle cx="90" cy="10" r="7" />
            <rect x="103" y="4.5" width="15" height="11" rx="3" />
            <path d="M10 23l6 13H4zM23 24h7v11h7M43 24h7v10h7M54 31l3 3-3 3M63 27h7v-4l7 7-7 7v-4h-7zM87 23v7h-4l7 7 7-7h-4v-7zM103 28l6-4h8l-3 4h4v8h-14z" />
            <path d="M7 42q-4 4 0 4t4-3M5 50l8-5-6 8q4-4 7-3 0 6-4 5M23 43q12 1 14 13M43 55q4 0 5-7t5-5 5 12M71 42q-3 0-3 3t-2 4q2 0 2 4t3 3M88 42q3 0 3 3t2 4q-2 0-2 4t-3 3M111 42l2 5h6l-5 3 2 6-5-3.500-5 3.500 2-6-5-3h6z" />
          </svg>
          <div className="flex w-[14px] flex-col border-l border-[#ababab] text-[#666]">
            <div className="flex h-[20px] items-center justify-center border-b border-[#ababab]"><Caret className="rotate-180 text-[#bbb]" /></div>
            <div className="flex h-[20px] items-center justify-center border-b border-[#ababab]"><Caret className="text-[#555]" /></div>
            <div className="flex h-[18px] flex-col items-center justify-center gap-px"><div className="h-px w-[7px] bg-[#555]" /><Caret className="text-[#555]" /></div>
          </div>
        </div>
        <div className="flex w-[52px] flex-col items-center">
          <svg width="28" height="28" viewBox="0 0 28 28" className="mt-[4px]"><path d="M13 4h11v11H13zM4 13h11v11H4z" fill="#edc67c" /><path d="M.5.5h11v11H.5zM16 16h11v11H16z" fill="#fff" stroke="#666" strokeWidth="1.2" /></svg>
          <T w={42} className="mt-[5px] leading-[16px]">Arrange</T>
          <Caret className="mt-[5px] text-[#666]" />
        </div>
        <div className="flex w-[40px] flex-col items-center text-[#9a9a9a]">
          <svg width="30" height="30" viewBox="0 0 30 30" className="mt-[5px] ml-[6px]"><rect x=".7" y=".7" width="25" height="25" rx="6" fill="#f4f0f5" stroke="#c9bccb" strokeWidth="1.3" /><path d="M29 8L16 22l3 3q8-8 10-17z" fill="#aaa" /><path d="M15 22q-5 0-4 4-1 3-4 3 10 2 12-4z" fill="#999" /></svg>
          <T w={31} className="mt-[2px] leading-[16px]">Quick</T>
          <div className="flex items-center gap-[2px] leading-[16px]"><T w={31}>Styles</T><Caret className="text-[#aaa]" /></div>
        </div>
        <div className="ml-[3px] flex flex-col gap-[5px] text-[#9a9a9a]">
          <div className="flex h-[18px] items-center gap-[3px] pt-[5px]"><svg width="17" height="16" viewBox="0 0 17 16"><path d="M3 6l5-5 5 5-5 5zM8 1v5M14 6q3 5 0 5t0-5z" fill="#eee" stroke="#999" /><path d="M0 12h16v4H0z" fill="#e2dade" /></svg><T w={51}>Shape Fill</T><Caret className="text-[#aaa]" /></div>
          <div className="flex h-[18px] items-center gap-[3px] pt-[4px]"><svg width="17" height="14" viewBox="0 0 17 14"><path d="M11 1.500H.5v9H9" fill="none" stroke="#999" /><path d="M6 11l1-4 7-7 2 2-7 7z" fill="#aaa" /></svg><T w={74}>Shape Outline</T><Caret className="text-[#aaa]" /></div>
          <div className="flex h-[18px] items-center gap-[3px] pt-[4px]"><svg width="17" height="14" viewBox="0 0 17 14"><path d="M3 5l2-4h8l2 2-2 9-3 2H2q-2-3 1-9z" fill="#bbb" /><rect x="4" y="1.5" width="9" height="8" rx="2" fill="#f4f4f4" stroke="#aaa" /></svg><T w={71}>Shape Effects</T><Caret className="text-[#aaa]" /></div>
        </div>
      </Group>
      <Group w="w-[92px]" label="Editing" lw={37} pad="pl-[28px]">
        <div className="ml-[7px] flex flex-col gap-[5px]">
          <div className="flex h-[18px] items-center gap-[4px] pt-[5px]"><svg width="16" height="14" viewBox="0 0 16 14"><path d="M3 0h3v2h1v3h2V2h1V0h3v2l2 5v6h-5V8H6v5H1V7l2-5z" fill="#555" /></svg><T w={22}>Find</T></div>
          <div className="flex h-[18px] items-center gap-[4px] pt-[4px]"><div className="flex w-[16px] flex-col text-[9px] leading-[7px] font-bold"><span>a<span className="text-[#aaa]">b</span></span><span className="pl-[4px]">a<span className="text-[#3f76b5]">c</span></span></div><T w={41}>Replace</T><Caret className="ml-[4px] text-[#666]" /></div>
          <div className="flex h-[18px] items-center gap-[4px] pt-[4px]"><svg width="16" height="15" viewBox="0 0 16 15"><path d="M4.500 1v11l3-2.500 2 4.500 2-1-2-4h3.500z" fill="#fff" stroke="#666" /></svg><T w={31}>Select</T><Caret className="-ml-[2px] text-[#666]" /></div>
        </div>
      </Group>
      <svg width="10" height="6" viewBox="0 0 10 6" className="mt-[77px] mr-[10px] ml-auto"><path d="M1 5l4-4 4 4" fill="none" stroke="#555" strokeWidth="2" /></svg>
    </div>
  );
}

/* -------- the slide -------- */

function Mini({ t, w, b, right }: { t: string; w: number; b?: boolean; right?: Line }) {
  return (
    <div className={`flex h-[7.95px] items-center justify-between ${b ? "font-bold" : ""}`}>
      <T w={w}>{t}</T>
      {right && <T w={right[1]} className="font-bold">{right[0]}</T>}
    </div>
  );
}

function MiniList({ items }: { items: [string, number, Line?][] }) {
  return (
    <div>
      {items.map(([t, w, right]) => {
        const cont = t.startsWith("~");
        return (
          <div key={t} className="flex h-[7.95px] items-center">
            <span className="w-[25px] pl-[13px]">{cont ? "" : "•"}</span>
            <T w={w}>{cont ? t.slice(1) : t}</T>
            {right && <T w={right[1]} className="ml-auto font-bold">{right[0]}</T>}
          </div>
        );
      })}
    </div>
  );
}

function SampleResume({ thick }: { thick?: boolean }) {
  return (
    <div className={`absolute top-[41px] left-[402px] h-[481px] w-[409px] bg-white pr-[14px] font-['Liberation_Sans'] text-[7.8px] leading-[8px] text-[#111] shadow-[2px_3px_4px_#888] ${thick ? "border-[6px] pt-[14px] pl-[13px]" : "border-[3px] pt-[17px] pl-[16px]"} border-black`}>
      <div className="h-[12px] text-[10.5px] leading-[12px] font-bold"><T w={84}>Morgan Mathews</T></div>
      <div className="mt-[2px] h-[4px] w-[345px] border-y border-black bg-[#666]" />
      <div className="mt-[2px] flex flex-col items-end text-[#333]">
        <T w={103}>1740 S. Willow St, Ottawa, KS 66067</T>
        <div className="flex"><T w={28}>(913) 481</T><T w={22} className="underline decoration-blue-600 decoration-wavy decoration-[0.5px]">-1406 •</T><T w={73}>&nbsp;mmathew3@emporia.edu</T></div>
      </div>
      <div className="mt-px h-[10px] text-[8.5px] leading-[10px] font-bold text-[#222]"><T w={40}>Education</T></div>
      <div className="mt-[2px] h-[2px] w-[345px] bg-black" />
      <div className="mt-[4px]">
        <Mini t="Arkansas Tech University, Russellville, Arkansas" w={161} b right={["Spring 2014", 39]} />
        <Mini t="Master of Science Degree in College Student Personnel" w={171} />
        <MiniList items={[["Cumulative GPA 4.0 out of 4.0", 93]]} />
      </div>
      <div className="mt-[4px]">
        <Mini t="Kansas State University, Manhattan, Kansas" w={146} b right={["Spring 2012", 39]} />
        <Mini t="Bachelor of Science Degree in Communication Sciences and Disorders" w={218} />
        <MiniList items={[
          ["Cumulative GPA 3.54 out of 4.0", 97],
          ["Dean's List", 34, ["Fall 2010-Spring 2011", 70]],
          ["Anatomy of the Speech Mechanism Lab Instructor", 153, ["Spring 2012", 39]],
        ]} />
      </div>
      <div className="mt-[5px] h-[11px] text-[8.5px] leading-[11px] font-bold text-[#222]"><T w={96}>Professional Experience</T></div>
      <div className="mt-[3px] h-[3px] w-[345px] border-y border-black bg-[#222]" />
      <div className="mt-[3px]">
        <Mini t="Academic Advisor" w={60} b right={["May 2014-Current", 58]} />
        <Mini t="Emporia State University Student Advising Center" w={164} b right={["Emporia, KS", 41]} />
        <MiniList items={[
          ["Advise students about degree requirements and course selection", 199],
          ["Maintain student records and monitor academic progress", 174],
          ["Participate in enrollment and recruiting events", 140],
          ["Plan, develop, and implement outreach and retention initiatives", 193],
          ["Prepare reports, including statistical summaries of advisees", 182],
          ["Assist with and participate in all orientation and registration periods", 205],
          ["Monitor students success for students admitted to the University through the 10% window", 274],
        ]} />
      </div>
      <div className="mt-[7.5px]">
        <Mini t="Campus Life Graduate Assistant" w={107} b right={["July 2012-May 2014", 64]} />
        <Mini t="Arkansas Tech University Student Services" w={142} b right={["Russellville, AR", 52]} />
        <MiniList items={[
          ["Serve as the head coach for the Golden Girls dance team and assisted in the overall coordination of the spirit", 334],
          ["~squad program.", 48],
          ["Design marketing materials and coordinate all recruitment strategies resulting in a percentage growth of 42% of", 341],
          ["~spirit squad members.", 68],
          ["Organize, promote, and execute annual campus and community events.", 220],
          ["Assist in the management of a $50,000.00 budget.", 154],
          ["Coordinate annual fundraising efforts.", 115],
          ["Plan and facilitate weekly team leadership meetings.", 160],
          ["Execute monthly academic advising and programming.", 167],
          ["Facilitate leadership training dedicated to building leadership skills by way of Strengths Finder.", 288],
          ["Back 2 Excellence Program Mentor", 108],
          ["Recruited and interviewed 65 potential residential director and campus life graduate assistants for our student", 335],
          ["~services department at the Oshkosh Placement Exchange.", 180],
        ]} />
      </div>
      <div className="mt-[8px]">
        <Mini t="Intern for Athletic Compliance Office" w={120} b right={["Summer 2013", 45]} />
        <Mini t="University of Missouri Kansas City Athletic Department" w={182} b right={["Kansas City, MO", 54]} />
        <MiniList items={[
          ["Prepared daily interpretations of NCAA legislation and rules to help coaches better understand how to conduct", 337],
          ["~themselves professionally with in the NCAA guidelines.", 168],
          ["Contributed to liaison meetings with student service departments such as international student affairs, financial", 338],
          ["~aid, and student athlete support services office.", 144],
          ["Organized all materials needed for monthly department compliance meetings as well as bi-weekly 1 on 1 meeting", 346],
          ["~agendas", 27],
          ["Reviewed team forms, phone logs, contact logs, and practices logs to ensure squads were adhering to NCAA", 334],
          ["~rules.", 16],
          ["Updated potential student athlete eligibility statuses through Front Rush and NCAA Eligibility Center data bases.", 342],
        ]} />
      </div>
    </div>
  );
}

const callouts: { box: string; lines: Line[]; left?: boolean }[] = [
  { box: "left-[170px] top-[110px] h-[69px] w-[151px]", lines: [["Education at the top", 132], ["is common for new", 125], ["or recent grads.", 102]] },
  { box: "left-[18px] top-[192px] h-[48px] w-[154px]", lines: [["Avoid MS Word", 101], ["templates.", 69]] },
  { box: "left-[113px] top-[253px] h-[48px] w-[202px]", lines: [["Experience should be in", 154], ["reverse chronological order.", 181]] },
  { box: "left-[224px] top-[332px] h-[48px] w-[143px]", lines: [["Bullets are quick", 107], ["and easy to read.", 111]] },
  { box: "left-[102px] top-[406px] h-[106px] w-[163px]", left: true, lines: [["References should be", 139], ["on a separate", 88], ["document and no", 115], ["mention of them on", 130], ["the resume.", 78]] },
  { box: "left-[819px] top-[133px] h-[107px] w-[129px]", lines: [["Dates and", 64], ["locations far", 81], ["right help avoid", 101], ["unnecessary", 82], ["white space.", 81]] },
  { box: "left-[842px] top-[281px] h-[47px] w-[88px]", lines: [["½”-1”", 37], ["margins", 51]] },
  { box: "left-[822px] top-[426px] h-[67px] w-[130px]", lines: [["10-12 point", 75], ["professional", 80], ["font.", 30]] },
];

function SlideCanvas({ thick }: { thick?: boolean }) {
  return (
    <div className="relative h-[541px] w-[961px] overflow-hidden bg-white font-['Lato'] text-black">
      <div className={`absolute top-[33px] left-[24px] text-[40px] leading-[56px] ${thick ? "font-normal" : "font-light [-webkit-text-stroke:0.3px_#000]"}`}><T w={310}>Formatting Basics</T></div>
      <SampleResume thick={thick} />
      {callouts.map((c) => (
        <div key={c.box} className={`absolute flex flex-col justify-center border-black bg-white text-[15.5px] leading-[19.2px] ${thick ? "border-[5px]" : "border-2"} ${c.left ? "items-start pl-[7px]" : "items-center"} ${c.box}`}>
          {c.lines.map(([t, w]) => <T key={t} w={w}>{t}</T>)}
        </div>
      ))}
      <svg width="961" height="541" viewBox="0 0 961 541" className="absolute inset-0" fill="none" stroke="#000" strokeWidth={thick ? 5 : 3}>
        <path d="M321 136.500H402M367 355.500H431M265 479L431 513M795 216.500H819" />
        <path d="M320 263.500H787.500V228" strokeWidth={thick ? 5 : 2} />
      </svg>
    </div>
  );
}

/* -------- thumbnails -------- */

type ThumbLine = { y: number; x: number; t: string; w: number; c?: string; b?: boolean };

/* Each row starts where the one above it ends, so the gap comes from the centre lines. */
function ThumbText({ rows, base = 0 }: { rows: ThumbLine[]; base?: number }) {
  return (
    <div className="flex flex-col">
      {rows.map((r, i) => {
        const top = i === 0 ? base : rows[i - 1].y + 2;
        return (
          <div key={r.t + r.y} className={`flex h-[4px] items-center ${r.c ?? "text-[5.5px] text-[#555]"}`} style={{ marginTop: r.y - 2 - top, marginLeft: r.x }}>
            {r.b !== false && <span className="mr-[1.5px] h-[1.5px] w-[1.5px] shrink-0 bg-black" />}
            <T w={r.w}>{r.t}</T>
          </div>
        );
      })}
    </div>
  );
}

const ttl = "text-[8px] text-black";
const bold = "text-[5.3px] font-bold text-[#222]";
const small = "text-[4.5px] text-[#555]";
const tiny = "text-[3.8px] text-[#666]";
const serif = "text-[4.5px] text-[#222] font-['Liberation_Serif']";
const serifBold = "text-[4.5px] font-bold text-black font-['Liberation_Serif']";

const thumb4: ThumbLine[] = [
  { y: 17, x: 16, t: "Resumes should be…", w: 72, c: ttl, b: false },
  { y: 33, x: 16, t: "Brief, clear and concise to highlight your most relevant credentials", w: 145 },
  { y: 40, x: 23, t: "Doesn’t have to include your entire work history", w: 91, c: small },
  { y: 47, x: 16, t: "Targeted to a specific industry, employer or job", w: 103 },
  { y: 55, x: 16, t: "Able to get you an interview…not the job", w: 90 },
  { y: 63, x: 16, t: "Your marketing brochure!", w: 56 },
];
const thumb5a: ThumbLine[] = [
  { y: 17, x: 16, t: "Resume Content", w: 57, c: ttl, b: false },
  { y: 37, x: 16, t: "Required", w: 17, c: "text-[4.5px] font-bold text-[#111]", b: false },
  { y: 43, x: 16, t: "Contact Information", w: 44 },
  { y: 51, x: 16, t: "Education", w: 22 },
  { y: 59, x: 16, t: "Experience", w: 24 },
];
const thumb5b: ThumbLine[] = [
  { y: 37, x: 2, t: "Optional", w: 17, c: "text-[4.5px] font-bold text-[#111]", b: false },
  { y: 43, x: 2, t: "Positioning Summary", w: 46 },
  { y: 51, x: 2, t: "Skills", w: 10 },
  { y: 59, x: 2, t: "Physical Address", w: 36 },
  { y: 67, x: 2, t: "Leadership", w: 24 },
  { y: 75, x: 2, t: "Volunteer or Service Experience", w: 70 },
  { y: 83, x: 2, t: "Religiously affiliated experience", w: 69 },
];
const thumb7top: ThumbLine[] = [
  { y: 10, x: 16, t: "Resume: Header and Contact Information", w: 129, c: ttl, b: false },
  { y: 22, x: 17, t: "Your header on resume, cover letters, reference lists should be", w: 140, c: bold },
  { y: 29, x: 20, t: "consistent…these are your marketing materials!", w: 108, c: bold, b: false },
];
const thumb7a: ThumbLine[] = [
  { y: 40, x: 18, t: "Include:", w: 17, c: "text-[5.3px] text-[#111] underline" },
  { y: 47, x: 25, t: "Name", w: 12, c: "text-[4.8px] text-[#444]" },
  { y: 53, x: 25, t: "Contact Information", w: 39, c: "text-[4.8px] text-[#444]" },
  { y: 59, x: 32, t: "Email", w: 9, c: small },
  { y: 64, x: 32, t: "Phone", w: 10, c: small },
  { y: 69, x: 32, t: "LinkedIn URL (edited)", w: 34, c: small },
  { y: 74, x: 32, t: "Twitter/Facebook/Tumblr, etc. if", w: 51, c: small },
  { y: 79, x: 36, t: "appropriate for your field", w: 41, c: small, b: false },
];
const thumb7b: ThumbLine[] = [
  { y: 40, x: 2, t: "Don’t Include:", w: 31, c: "text-[5.3px] text-[#111] underline" },
  { y: 47, x: 9, t: "Nationality", w: 21, c: "text-[4.8px] text-[#444]" },
  { y: 53, x: 9, t: "Birthdate", w: 18, c: "text-[4.8px] text-[#444]" },
  { y: 59, x: 9, t: "Headshot", w: 18, c: "text-[4.8px] text-[#444]" },
];
const thumb7end: ThumbLine[] = [
  { y: 91, x: 18, t: "Make sure you use a work appropriate email and have an appropriate voicemail", w: 151, c: "text-[4.8px] italic text-[#222]" },
  { y: 97, x: 90, t: "greeting!", w: 17, c: "text-[4.8px] italic text-[#222]", b: false },
];
const thumb8: ThumbLine[] = [
  { y: 17, x: 16, t: "Resume: Positioning Summary", w: 104, c: ttl, b: false },
  { y: 33, x: 16, t: "This may be your chance to define yourself", w: 94 },
  { y: 41, x: 16, t: "Highlights your top qualifications or skills for a particular", w: 124 },
  { y: 47, x: 19, t: "position/field", w: 30, b: false },
  { y: 55, x: 16, t: "More common for applicants with a more extensive work history", w: 142 },
  { y: 63, x: 16, t: "Use this in place of an Objective", w: 71 },
  { y: 73, x: 24, t: "Analytical Chemist with 4 years’ experience in synthesis, purification and characterization", w: 146, c: serifBold, b: false },
  { y: 77.5, x: 24, t: "of fragments of large natural product molecules.", w: 72, c: serif, b: false },
  { y: 83, x: 30, t: "Expertise in Physical Organic Chemistry, and Organic Synthesis", w: 102, c: serif },
  { y: 87.5, x: 30, t: "3 years’ experience in Molecular Modeling Condensation Raffian Spectroscopy", w: 124, c: serif },
  { y: 92, x: 30, t: "Excellent customer support, skilled in promoting and managing teamwork", w: 116, c: serif },
];
const thumb9: ThumbLine[] = [
  { y: 17, x: 16, t: "Resume: Education Section", w: 92, c: ttl, b: false },
  { y: 32.5, x: 16, t: "Always:", w: 11, c: "text-[4px] font-bold text-[#222]", b: false },
  { y: 37, x: 23, t: "Degree(s)", w: 13, c: tiny },
  { y: 41, x: 23, t: "University of Utah", w: 24, c: tiny },
  { y: 45, x: 23, t: "Salt Lake City, Utah", w: 25, c: tiny },
  { y: 49, x: 23, t: "Graduation Date (M/Y)", w: 30, c: tiny },
  { y: 54.5, x: 16, t: "Optional:", w: 14, c: "text-[4px] font-bold text-[#222]", b: false },
  { y: 59, x: 23, t: "GPA, Based on Major", w: 29, c: tiny },
  { y: 63, x: 23, t: "Relevant Coursework", w: 28, c: tiny },
  { y: 67, x: 23, t: "Awards/Honors", w: 21, c: tiny },
  { y: 71, x: 23, t: "Service and Leadership", w: 30, c: tiny },
  { y: 76, x: 23, t: "Learning Abroad", w: 22, c: tiny },
  { y: 80.5, x: 16, t: "Never:", w: 10, c: "text-[4px] font-bold text-[#222]", b: false },
  { y: 85, x: 23, t: "High School Education", w: 32, c: tiny },
  { y: 93, x: 23, t: "*Associate’s degree is not necessary, but you can add if it offers relevant information", w: 115, c: "text-[3.8px] text-[#222]", b: false },
];
const thumb10: ThumbLine[] = [
  { y: 17, x: 16, t: "Resume: Experience", w: 69, c: ttl, b: false },
  { y: 33.5, x: 16, t: "5 main parts:", w: 24, c: "text-[5px] text-[#444]" },
  { y: 38.5, x: 23, t: "Job Title", w: 13, c: small },
  { y: 44, x: 23, t: "Employer", w: 15, c: small },
  { y: 49.5, x: 23, t: "Dates", w: 9, c: small },
  { y: 54.5, x: 23, t: "Location", w: 14, c: small },
  { y: 59.5, x: 23, t: "Accomplishment statements", w: 45, c: small },
];

function ThumbRow({ n, star, active, children }: { n: number; star?: boolean; active?: boolean; children: ReactNode }) {
  return (
    <div className="flex h-[128px] shrink-0">
      <div className={`flex w-[21px] flex-col items-end text-[15.5px] leading-[12px] tracking-tight ${active ? "text-[#d24726]" : "text-[#505050]"}`}>
        {n}
        {star && <svg width="10" height="10" viewBox="0 0 10 10" className="mt-[4px]"><path d="M5 0l1.300 3.500H10L7 5.800 8.200 10 5 7.500 1.800 10 3 5.800 0 3.500h3.700z" fill="#666" /></svg>}
      </div>
      {active ? (
        <div className="-mt-[2px] ml-[3px] h-[114px] w-[197px] overflow-hidden border-[3px] border-[#d24726] bg-white">
          <div className="h-[541px] w-[961px] origin-top-left scale-[0.1987]">{children}</div>
        </div>
      ) : (
        <div className="ml-[5px] h-[110px] w-[193px] overflow-hidden border border-[#c3c3c3] bg-white font-['Lato'] leading-none">{children}</div>
      )}
    </div>
  );
}

function ThumbPane() {
  return (
    <div className="flex h-[858px] w-[259px] shrink-0 overflow-hidden border-r border-[#b5b5b5]">
      <div className="flex h-[858px] w-[239px] flex-col pt-[8px]">
        <ThumbRow n={4}><ThumbText rows={thumb4} /></ThumbRow>
        <ThumbRow n={5}>
          <div className="flex"><div className="w-[97px]"><ThumbText rows={thumb5a} /></div><ThumbText rows={thumb5b} /></div>
        </ThumbRow>
        <ThumbRow n={6} active><SlideCanvas thick /></ThumbRow>
        <ThumbRow n={7}>
          <ThumbText rows={thumb7top} />
          <div className="flex"><div className="w-[97px]"><ThumbText rows={thumb7a} base={31} /></div><ThumbText rows={thumb7b} base={31} /></div>
          <ThumbText rows={thumb7end} base={81} />
        </ThumbRow>
        <ThumbRow n={8}><ThumbText rows={thumb8} /></ThumbRow>
        <ThumbRow n={9}><ThumbText rows={thumb9} /></ThumbRow>
        <ThumbRow n={10} star>
          <ThumbText rows={thumb10} />
          <div className="mt-[5px] ml-[13px] h-[5px] w-[69px] bg-[#f4511e] pl-[12px] text-[3.5px] leading-[5px] text-[#ffb79c]"><T w={54}>RELEVANT PROFESSIONAL EXPERIENCE</T></div>
          <div className="ml-[13px] flex">
            <div className="h-[20px] w-[8px] bg-[#2d4a66]" />
            <div className="flex flex-col pt-[1px] pl-[5px] text-[3.5px] leading-[3.8px] text-[#555]"><T w={22}>Visiting, Tualia Bair</T><T w={48}>Clemson Up Lane | Chester 2013 – Current</T></div>
          </div>
        </ThumbRow>
      </div>
      <div className="mt-[2px] flex h-[854px] w-[15px] flex-col bg-[#dadada]">
        <div className="flex h-[15px] items-center justify-center border border-[#ababab] bg-white"><svg width="7" height="4" viewBox="0 0 7 4"><path d="M3.500 0L7 4H0z" fill="#555" /></svg></div>
        <div className="mt-[126px] h-[273px] border border-[#ababab] bg-white" />
        <div className="mt-auto flex h-[15px] items-center justify-center border border-[#ababab] bg-white"><svg width="7" height="4" viewBox="0 0 7 4"><path d="M3.500 4L7 0H0z" fill="#555" /></svg></div>
      </div>
    </div>
  );
}

function Editor() {
  return (
    <div className="flex h-[858px] grow flex-col">
      <div className="flex h-[617px] border-b border-[#b0b0b0]">
        <div className="mt-[36px] ml-[22px] h-[543px] w-[963px] border border-[#cfcfcf]"><SlideCanvas /></div>
        <div className="ml-auto flex w-[16px] flex-col items-center">
          <div className="mt-[2px] flex h-[557px] w-[15px] flex-col bg-[#dedede]">
            <div className="flex h-[15px] items-center justify-center border border-[#ababab] bg-white"><svg width="7" height="4" viewBox="0 0 7 4"><path d="M3.500 0L7 4H0z" fill="#555" /></svg></div>
            <div className="mt-[132px] h-[26px] border border-[#ababab] bg-white" />
            <div className="mt-auto flex h-[14px] items-center justify-center border border-[#ababab] bg-white"><svg width="7" height="4" viewBox="0 0 7 4"><path d="M3.500 4L7 0H0z" fill="#555" /></svg></div>
          </div>
          <svg width="8" height="9" viewBox="0 0 8 9" className="mt-[7px]"><path d="M4 0l3 4H1zM4 4.500l3 4H1z" fill="#666" /></svg>
          <svg width="8" height="9" viewBox="0 0 8 9" className="mt-[9px]"><path d="M1 0h6L4 4zM1 4.500h6l-3 4z" fill="#666" /></svg>
        </div>
      </div>
      <div className="pt-[6px] pl-[11px] text-[14px] leading-[20px] text-[#6a6a6a]"><T w={117}>Click to add notes</T></div>
    </div>
  );
}

function StatusBar() {
  return (
    <div className="flex h-[23px] items-center border-b border-[#999] bg-[#b83b1d] pl-[6px] text-[11px] text-[#fbeae5]">
      <div className="w-[91px]"><T w={71}>SLIDE 6 OF 20</T></div>
      <svg width="14" height="13" viewBox="0 0 14 13"><path d="M7 2Q4 0 1 1v10q3-1 6 1V2q2-1 4-1M9 4l4 6M13 4L9 10" fill="none" stroke="#fff" /></svg>
      <div className="ml-auto flex h-[22px] items-center">
        <svg width="12" height="12" viewBox="0 0 12 12"><path d="M6 0l3 4H3zM0 7h12M0 10.500h12" fill="#fff" stroke="#fff" /></svg>
        <div className="w-[59px] pl-[4px]"><T w={33}>NOTES</T></div>
        <svg width="12" height="12" viewBox="0 0 12 12"><path d="M0 0h12v8H6l-3 4V8H0z" fill="#fff" /></svg>
        <div className="w-[84px] pl-[4px]"><T w={61}>COMMENTS</T></div>
        <div className="flex h-[22px] w-[38px] items-center justify-center bg-[#7f2b17]"><svg width="14" height="13" viewBox="0 0 14 13"><path d="M.7.7h12.600v11.600H.7zM4 1v11M7 3h4v3H7zM6 9h6" fill="none" stroke="#fff" strokeWidth="1.4" /></svg></div>
        <svg width="14" height="12" viewBox="0 0 14 12" className="ml-[12px]"><path d="M0 0h6v5H0zM8 0h6v5H8zM0 7h6v5H0zM8 7h6v5H8z" fill="#fff" /></svg>
        <svg width="13" height="12" viewBox="0 0 13 12" className="ml-[24px]"><path d="M6.500 2Q4 0 .5 1v9q3-1 6 1 3-2 6-1V1q-3-1-6 1v9M2 4h3M2 6h3M2 8h3M8 4h3M8 6h3M8 8h3" fill="none" stroke="#fff" /></svg>
        <svg width="13" height="13" viewBox="0 0 13 13" className="ml-[24px]"><path d="M0 .7h13M1.500 1v6h10V1M6.500 7v5M3 12h7" fill="none" stroke="#fff" strokeWidth="1.3" /></svg>
        <div className="ml-[19px] h-[2px] w-[6px] bg-white" />
        <svg width="100" height="13" viewBox="0 0 100 13" className="ml-[4px]"><path d="M0 6.500h100M52 3v7" stroke="#fff" /><path d="M36 0h4v13h-4z" fill="#fff" /></svg>
        <svg width="8" height="8" viewBox="0 0 8 8" className="ml-[5px]"><path d="M0 4h8M4 0v8" stroke="#fff" strokeWidth="2" /></svg>
        <div className="ml-[15px] w-[35px]"><T w={22}>76%</T></div>
        <svg width="13" height="13" viewBox="0 0 13 13" className="mr-[7px]"><path d="M.5.5h12v12H.5zM6.500 1v4M6.500 8v4M1 6.500h4M8 6.500h4M5 3l1.500-2L8 3M5 10l1.500 2L8 10M3 5L1 6.500 3 8M10 5l2 1.500L10 8" fill="none" stroke="#fff" /></svg>
      </div>
    </div>
  );
}

export default function App() {
  return (
    <div className="flex h-[1024px] w-[2560px] overflow-hidden bg-white font-['Open_Sans','Noto_Sans',sans-serif]">
      <div className="flex w-[1280px] shrink-0 flex-col">
        <TitleBar />
        <MenuBar />
        <ReaderToolbar />
        <ReaderBody />
        <Taskbar />
      </div>
      <div className="flex w-[1280px] shrink-0 flex-col">
        <PptTitle />
        <Tabs />
        <Ribbon />
        <div className="flex h-[858px] bg-[linear-gradient(#f5f5f5,#e6e6e6)]">
          <ThumbPane />
          <Editor />
        </div>
        <StatusBar />
      </div>
    </div>
  );
}
